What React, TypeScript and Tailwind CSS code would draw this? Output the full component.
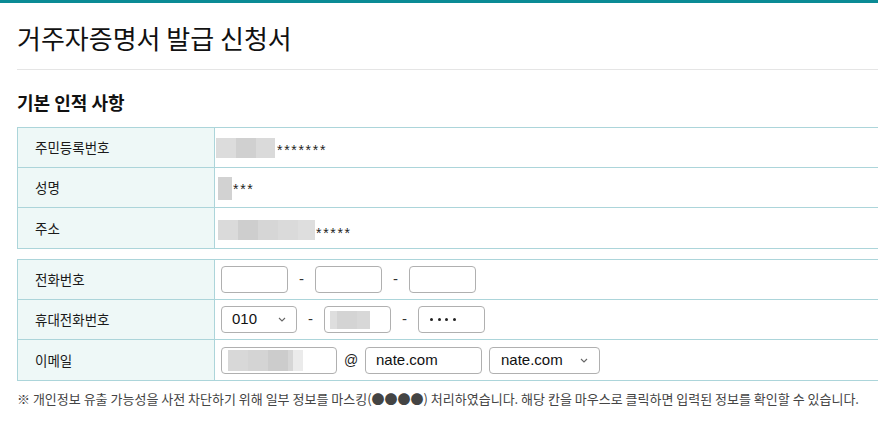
import React from "react";

function Chevron() {
  return (
    <svg width="8" height="5" viewBox="0 0 8 5" className="shrink-0">
      <path d="M1 1 L4 4 L7 1" fill="none" stroke="#666" strokeWidth="1.1" />
    </svg>
  );
}

function Dash() {
  return <div className="w-[27px] text-center text-[15px] text-[#333] font-['Liberation_Sans',sans-serif]">-</div>;
}

function Label({ children }: { children: React.ReactNode }) {
  return (
    <div className="w-[197px] shrink-0 bg-[#eef8f7] border-r border-[#acd5da] pl-[17px] flex items-center text-[13.5px] text-[#1a1a1a]">
      {children}
    </div>
  );
}

function Row({ label, children, last }: { label: string; children: React.ReactNode; last?: boolean }) {
  return (
    <div className={last ? "flex h-[40px]" : "flex h-[40px] border-b border-[#acd5da]"}>
      <Label>{label}</Label>
      <div className="flex-1 flex items-center pl-[6px]">{children}</div>
    </div>
  );
}

export default function App() {
  return (
    <div className="w-[878px] h-[422px] overflow-hidden bg-white font-['Noto_Sans_CJK_KR',sans-serif] text-[#222]">
      <div className="h-[3px] bg-[#0b8b95]" />
      <div className="pl-[17px] w-[900px]">
        <h1 className="mt-[19px] text-[26px] leading-[32px] text-[#111]">거주자증명서 발급 신청서</h1>
        <div className="mt-[15px] h-px bg-[#e5e5e5]" />
        <h2 className="mt-[20px] text-[18px] leading-[24px] font-bold text-[#111]">기본 인적 사항</h2>

        <div className="mt-[13px] border-t border-b border-l border-[#acd5da]">
          <Row label="주민등록번호">
            <div className="flex items-center -ml-[5px]">
              <div className="flex h-[20px]">
                <div className="w-[20px] bg-[#dcdcdc]" />
                <div className="w-[20px] bg-[#d0d0d0]" />
                <div className="w-[19px] bg-[#dadada]" />
              </div>
              <span className="ml-[2px] text-[14px] tracking-[1.7px] font-['Liberation_Sans',sans-serif] text-[#222] mt-[6px]">*******</span>
            </div>
          </Row>
          <Row label="성명">
            <div className="flex items-center -ml-[3px]">
              <div className="w-[14px] h-[23px] bg-[#d2d2d2] mt-[2px]" />
              <span className="ml-[1px] text-[14px] tracking-[1.7px] font-['Liberation_Sans',sans-serif] text-[#222] mt-[4px]">***</span>
            </div>
          </Row>
          <Row label="주소" last>
            <div className="flex items-center -ml-[3px]">
              <div className="flex h-[20px] mt-[4px]">
                <div className="w-[20px] bg-[#dadada]" />
                <div className="w-[20px] bg-[#cecece]" />
                <div className="w-[20px] bg-[#d6d6d6]" />
                <div className="w-[20px] bg-[#dadada]" />
                <div className="w-[17px] bg-[#dedede]" />
              </div>
              <span className="ml-[1px] text-[14px] tracking-[1.7px] font-['Liberation_Sans',sans-serif] text-[#222] mt-[10px]">*****</span>
            </div>
          </Row>
        </div>

        <div className="mt-[10px] border-t border-b border-l border-[#acd5da] font-normal">
          <Row label="전화번호">
            <div className="flex items-center">
              <div className="w-[67px] h-[27px] border border-[#b0b0b0] rounded-[4px] bg-white" />
              <Dash />
              <div className="w-[67px] h-[27px] border border-[#b0b0b0] rounded-[4px] bg-white" />
              <Dash />
              <div className="w-[67px] h-[27px] border border-[#b0b0b0] rounded-[4px] bg-white" />
            </div>
          </Row>
          <Row label="휴대전화번호">
            <div className="flex items-center">
              <div className="w-[76px] h-[27px] border border-[#b0b0b0] rounded-[4px] bg-white flex items-center justify-between pl-[10px] pr-[10px] font-['Liberation_Sans',sans-serif] text-[15px] text-[#111]">
                <span>010</span>
                <Chevron />
              </div>
              <Dash />
              <div className="w-[67px] h-[27px] border border-[#b0b0b0] rounded-[4px] bg-white flex items-center pl-[5px]">
                <div className="flex h-[18px]">
                  <div className="w-[7px] bg-[#dedede]" />
                  <div className="w-[20px] bg-[#d4d4d4]" />
                  <div className="w-[13px] bg-[#d8d8d8]" />
                </div>
              </div>
              <Dash />
              <div className="w-[67px] h-[27px] border border-[#b0b0b0] rounded-[4px] bg-white flex items-center pl-[11px] gap-[4.5px]">
                <span className="w-[3px] h-[3px] rounded-full bg-[#222]" />
                <span className="w-[3px] h-[3px] rounded-full bg-[#222]" />
                <span className="w-[3px] h-[3px] rounded-full bg-[#222]" />
                <span className="w-[3px] h-[3px] rounded-full bg-[#222]" />
              </div>
            </div>
          </Row>
          <Row label="이메일" last>
            <div className="flex items-center">
              <div className="w-[116px] h-[27px] border border-[#b0b0b0] rounded-[4px] bg-white flex items-center pl-[6px]">
                <div className="flex h-[21px]">
                  <div className="w-[20px] bg-[#d8d8d8]" />
                  <div className="w-[20px] bg-[#d4d4d4]" />
                  <div className="w-[20px] bg-[#cccccc]" />
                  <div className="w-[5px] bg-[#d6d6d6]" />
                  <div className="w-[10px] bg-[#ebebeb]" />
                </div>
              </div>
              <div className="w-[28px] text-center text-[14px] text-[#222] font-['Liberation_Sans',sans-serif]">@</div>
              <div className="w-[117px] h-[27px] border border-[#b0b0b0] rounded-[4px] bg-white flex items-center pl-[10px] font-['Liberation_Sans',sans-serif] text-[15px] text-[#111]">
                nate.com
              </div>
              <div className="ml-[7px] w-[111px] h-[27px] border border-[#b0b0b0] rounded-[4px] bg-white flex items-center justify-between pl-[11px] pr-[11px] font-['Liberation_Sans',sans-serif] text-[15px] text-[#111]">
                <span>nate.com</span>
                <Chevron />
              </div>
            </div>
          </Row>
        </div>

        <p className="mt-[9px] text-[13px] leading-[18px] text-[#444]">
          ※ 개인정보 유출 가능성을 사전 차단하기 위해 일부 정보를 마스킹(●●●●) 처리하였습니다. 해당 칸을 마우스로 클릭하면 입력된 정보를 확인할 수 있습니다.
        </p>
      </div>
    </div>
  );
}
